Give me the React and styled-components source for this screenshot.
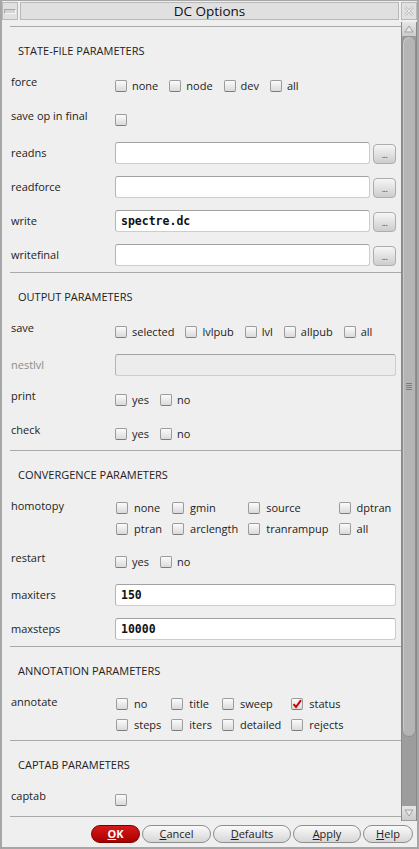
import React from 'react';
import styled, { createGlobalStyle } from 'styled-components';

const GlobalStyle = createGlobalStyle`
  html, body {
    margin: 0;
    padding: 0;
    background: #efefef;
  }
  body {
    font-family: "Open Sans", "Noto Sans", sans-serif;
    color: #1c1c1c;
  }
`;

const Window = styled.div`
  box-sizing: border-box;
  width: 419px;
  height: 849px;
  display: flex;
  flex-direction: column;
  background: #efefef;
  border: 2px solid #a6a6a6;
  border-top-width: 1px;
  overflow: hidden;
`;

const TitleBar = styled.div`
  height: 21px;
  display: flex;
  align-items: flex-start;
  gap: 2px;
  padding-top: 1px;
  box-sizing: border-box;
`;

const TitleButton = styled.div`
  box-sizing: border-box;
  width: 16px;
  height: 18px;
  border: 1px solid #b9b9b9;
  background: #e0e0e0;
  display: flex;
  align-items: center;
  justify-content: center;
`;

const MinBar = styled.div`
  width: 10px;
  height: 3px;
  background: #d4d4d4;
  border: 1px solid #a8a8a8;
  border-right-color: #f4f4f4;
  border-bottom-color: #f4f4f4;
`;

const TitleText = styled.div`
  flex: 1;
  box-sizing: border-box;
  height: 18px;
  border: 1px solid #b9b9b9;
  background: #e0e0e0;
  font-size: 13.5px;
  line-height: 16px;
  text-align: center;
  color: #111;
`;

const Main = styled.div`
  height: 799px;
  display: flex;
`;

const Content = styled.div`
  flex: 1;
  box-sizing: border-box;
  padding: 4px 0 0 8px;
  overflow: hidden;
`;

const Section = styled.div`
  border-top: 1px solid #a9a9a9;
  padding-top: 7px;
`;

const EndRule = styled.div`
  border-top: 1px solid #a9a9a9;
`;

const Heading = styled.div`
  height: 34px;
  line-height: 34px;
  padding-left: 8px;
  font-size: 11px;
  color: #222;
`;

const Row = styled.div`
  display: grid;
  grid-template-columns: 104px 1fr;
  align-items: center;
  min-height: ${p => (p.$tall ? 52 : 34)}px;
  box-sizing: border-box;
  padding: ${p => (p.$tall ? '5px 5px 5px 1px' : '0 5px 0 1px')};
`;

const nudge = { up: [0, 8], down: [0, 2], top: [-2, 0] };

const Label = styled.div`
  font-size: 11px;
  line-height: 21px;
  color: ${p => (p.$dim ? '#8e8e8e' : '#1c1c1c')};
  align-self: ${p => (p.$v === 'top' ? 'start' : 'center')};
  margin-top: ${p => nudge[p.$v][0]}px;
  margin-bottom: ${p => nudge[p.$v][1]}px;
`;

const Inline = styled.div`
  display: flex;
  align-items: center;
  gap: 11px;
  height: 21px;
`;

const CheckGrid = styled.div`
  display: grid;
  grid-template-columns: repeat(4, max-content);
  grid-auto-rows: 21px;
  column-gap: 10px;
  padding-left: 1px;
`;

const CheckItem = styled.label`
  display: flex;
  align-items: center;
  gap: ${p => p.$gap}px;
  font-size: 11px;
  color: #1c1c1c;
`;

const Box = styled.span`
  box-sizing: border-box;
  width: 12px;
  height: 12px;
  border: 1px solid #9c9c9c;
  border-bottom-color: #7c7c7c;
  border-radius: 2px;
  background: linear-gradient(#fbfbfb, #dadada);
  display: flex;
  align-items: center;
  justify-content: center;
  margin-top: 1px;
`;

const FieldRow = styled.div`
  display: flex;
  align-items: flex-end;
  gap: 3px;
`;

const Field = styled.div`
  flex: 1;
  box-sizing: border-box;
  height: 22px;
  border: 1px solid #cdcdcd;
  border-top-color: #a2a2a2;
  border-left-color: #b4b4b4;
  border-radius: 3px;
  background: ${p => (p.$disabled ? '#ececec' : '#fff')};
  padding-left: 5px;
  font-family: "DejaVu Sans Mono", monospace;
  font-weight: bold;
  font-size: 11.5px;
  line-height: 20px;
  color: #111;
`;

const Browse = styled.div`
  box-sizing: border-box;
  width: 23px;
  height: 20px;
  border: 1px solid #adadad;
  border-radius: 4px;
  background: linear-gradient(#f6f6f6, #cdcdcd);
  font-size: 9px;
  line-height: 20px;
  text-align: center;
  color: #2b3f66;
  letter-spacing: -0.5px;
`;

const ScrollBar = styled.div`
  box-sizing: border-box;
  width: 16px;
  display: flex;
  flex-direction: column;
  border-left: 1px solid #8a8a8a;
  border-right: 1px solid #8a8a8a;
  background: #9d9d9d;
  padding-bottom: 1px;
`;

const ScrollButton = styled.div`
  height: 14px;
  background: linear-gradient(#e6e6e6, #cbcbcb);
  display: flex;
  align-items: center;
  justify-content: center;
`;

const Track = styled.div`
  flex: 1;
`;

const Thumb = styled.div`
  box-sizing: border-box;
  height: 701px;
  border: 1px solid #8f8f8f;
  border-radius: 7px;
  background: #b5b5b5;
  box-shadow: inset 1px 1px 0 #c9c9c9;
  display: flex;
  align-items: center;
  justify-content: center;
`;

const Grip = styled.div`
  width: 6px;
  height: 8px;
  background: repeating-linear-gradient(#7c7c7c 0 1px, transparent 1px 2px);
`;

const Footer = styled.div`
  flex: 1;
  display: flex;
  align-items: center;
  justify-content: flex-end;
  gap: 2px;
  padding-right: 4px;
`;

const Button = styled.div`
  box-sizing: border-box;
  width: ${p => p.$w}px;
  height: 18px;
  border-radius: 9px;
  border: 1px solid ${p => (p.$primary ? '#7a0000' : '#8e8e8e')};
  background: ${p =>
    p.$primary
      ? 'linear-gradient(#d81818, #a80000)'
      : 'linear-gradient(#fafafa, #d6d6d6)'};
  color: ${p => (p.$primary ? '#fff' : '#1c1c1c')};
  font-weight: ${p => (p.$primary ? 700 : 400)};
  font-size: 11px;
  line-height: 16px;
  text-align: center;
  u {
    text-decoration: underline;
  }
`;

const Check = ({ label, checked, gap = 5 }) => (
  <CheckItem $gap={gap}>
    <Box>
      {checked && (
        <svg width="10" height="10" viewBox="0 0 10 10">
          <path d="M1.5 5.2 L4 8 L9 1.2" fill="none" stroke="#c80000" strokeWidth="2" />
        </svg>
      )}
    </Box>
    {label && <span>{label}</span>}
  </CheckItem>
);

const InlineChecks = ({ items }) => (
  <Inline>
    {items.map(i => (
      <Check key={i} label={i} />
    ))}
  </Inline>
);

const GridChecks = ({ items, checked = [] }) => (
  <CheckGrid>
    {items.map(i => (
      <Check key={i} label={i} gap={6} checked={checked.includes(i)} />
    ))}
  </CheckGrid>
);

const FileRow = ({ label, value }) => (
  <Row>
    <Label $v="down">{label}</Label>
    <FieldRow>
      <Field>{value}</Field>
      <Browse>...</Browse>
    </FieldRow>
  </Row>
);

const ValueRow = ({ label, value, disabled }) => (
  <Row>
    <Label $v="down" $dim={disabled}>{label}</Label>
    <Field $disabled={disabled}>{value}</Field>
  </Row>
);

const CheckRow = ({ label, items }) => (
  <Row>
    <Label $v="up">{label}</Label>
    {items ? <InlineChecks items={items} /> : <Inline><Check /></Inline>}
  </Row>
);

export default function App() {
  return (
    <>
      <GlobalStyle />
      <Window>
        <TitleBar>
          <TitleButton>
            <MinBar />
          </TitleButton>
          <TitleText>DC Options</TitleText>
          <TitleButton>
            <svg width="12" height="12" viewBox="0 0 12 12">
              <path d="M2 2 L10 10 M10 2 L2 10" stroke="#c4c4c4" strokeWidth="2.5" />
              <path d="M2 2 L10 10 M10 2 L2 10" stroke="#ececec" strokeWidth="1" />
            </svg>
          </TitleButton>
        </TitleBar>

        <Main>
          <Content>
            <Section>
              <Heading>STATE-FILE PARAMETERS</Heading>
              <CheckRow label="force" items={['none', 'node', 'dev', 'all']} />
              <CheckRow label="save op in final" />
              <FileRow label="readns" />
              <FileRow label="readforce" />
              <FileRow label="write" value="spectre.dc" />
              <FileRow label="writefinal" />
            </Section>

            <Section>
              <Heading>OUTPUT PARAMETERS</Heading>
              <CheckRow label="save" items={['selected', 'lvlpub', 'lvl', 'allpub', 'all']} />
              <ValueRow label="nestlvl" disabled />
              <CheckRow label="print" items={['yes', 'no']} />
              <CheckRow label="check" items={['yes', 'no']} />
            </Section>

            <Section>
              <Heading>CONVERGENCE PARAMETERS</Heading>
              <Row $tall>
                <Label $v="top">homotopy</Label>
                <GridChecks
                  items={['none', 'gmin', 'source', 'dptran', 'ptran', 'arclength', 'tranrampup', 'all']}
                />
              </Row>
              <CheckRow label="restart" items={['yes', 'no']} />
              <ValueRow label="maxiters" value="150" />
              <ValueRow label="maxsteps" value="10000" />
            </Section>

            <Section>
              <Heading>ANNOTATION PARAMETERS</Heading>
              <Row $tall>
                <Label $v="top">annotate</Label>
                <GridChecks
                  items={['no', 'title', 'sweep', 'status', 'steps', 'iters', 'detailed', 'rejects']}
                  checked={['status']}
                />
              </Row>
            </Section>

            <Section>
              <Heading>CAPTAB PARAMETERS</Heading>
              <CheckRow label="captab" />
            </Section>
            <EndRule />
          </Content>

          <ScrollBar>
            <ScrollButton>
              <svg width="10" height="8" viewBox="0 0 10 8">
                <path d="M1 7 L5 1 L9 7 Z" fill="#e8e8e8" stroke="#a0a0a0" strokeWidth="1" />
              </svg>
            </ScrollButton>
            <Track>
              <Thumb>
                <Grip />
              </Thumb>
            </Track>
            <ScrollButton>
              <svg width="10" height="8" viewBox="0 0 10 8">
                <path d="M1 1 L5 7 L9 1 Z" fill="#e8e8e8" stroke="#a0a0a0" strokeWidth="1" />
              </svg>
            </ScrollButton>
          </ScrollBar>
        </Main>

        <Footer>
          <Button $primary $w={49}><u>O</u>K</Button>
          <Button $w={69}><u>C</u>ancel</Button>
          <Button $w={78}><u>D</u>efaults</Button>
          <Button $w={68}><u>A</u>pply</Button>
          <Button $w={50}><u>H</u>elp</Button>
        </Footer>
      </Window>
    </>
  );
}
